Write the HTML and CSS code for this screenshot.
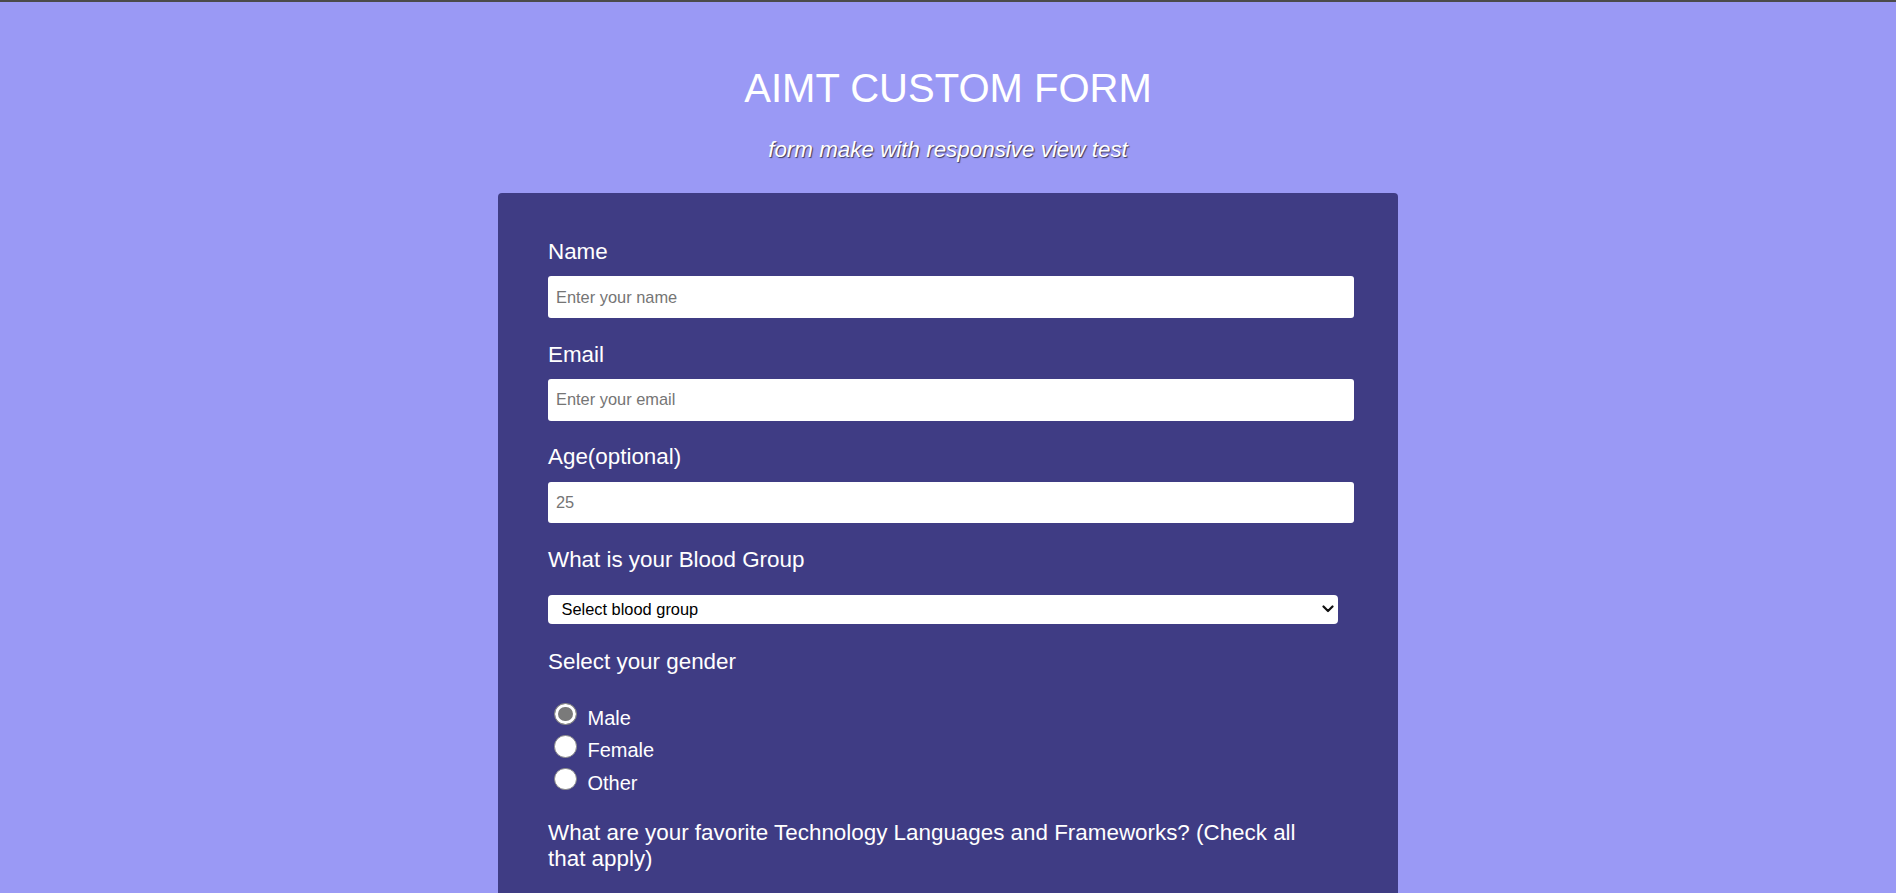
FILE: index.html
```html
<!DOCTYPE html>
<html lang="en">
<head>
<meta charset="utf-8">
<title>AIMT Custom Form</title>
<link rel="stylesheet" href="styles.css">
</head>
<body>
<header class="page-header">
  <h1 class="title">AIMT CUSTOM FORM</h1>
  <p class="subtitle">form make with responsive view test</p>
</header>
<main class="card">
  <form class="survey">
    <div class="group">
      <label class="field-label" for="name">Name</label>
      <input class="text-input" id="name" type="text" placeholder="Enter your name">
    </div>
    <div class="group">
      <label class="field-label" for="email">Email</label>
      <input class="text-input" id="email" type="email" placeholder="Enter your email">
    </div>
    <div class="group">
      <label class="field-label" for="age">Age(optional)</label>
      <input class="text-input" id="age" type="number" placeholder="25">
    </div>
    <div class="group">
      <p class="field-label">What is your Blood Group</p>
      <div class="select-wrap">
        <select class="select" id="blood">
          <option>Select blood group</option>
          <option>A+</option>
          <option>A-</option>
          <option>B+</option>
          <option>B-</option>
          <option>O+</option>
          <option>O-</option>
          <option>AB+</option>
          <option>AB-</option>
        </select>
        <svg class="chevron" width="12" height="8" viewBox="0 0 12 8" aria-hidden="true"><path d="M1.5 1.5 L6 6 L10.5 1.5" fill="none" stroke="#111" stroke-width="2.2" stroke-linecap="round" stroke-linejoin="round"/></svg>
      </div>
    </div>
    <div class="group group-radio">
      <p class="field-label">Select your gender</p>
      <div class="radio-list">
        <label class="radio-row"><input class="radio" type="radio" name="gender" checked><span>Male</span></label>
        <label class="radio-row"><input class="radio" type="radio" name="gender"><span>Female</span></label>
        <label class="radio-row"><input class="radio" type="radio" name="gender"><span>Other</span></label>
      </div>
    </div>
    <div class="group group-last">
      <p class="field-label wrap-label">What are your favorite Technology Languages and Frameworks? (Check all that apply)</p>
    </div>
  </form>
</main>
</body>
</html>
```
FILE: styles.css
```css
html, body {
  margin: 0;
  padding: 0;
}

body {
  background: #9a99f5;
  border-top: 2px solid #4b4b4b;
  font-family: "Liberation Sans", Arial, sans-serif;
  color: #ffffff;
}

.page-header {
  text-align: center;
  padding-top: 63.8px;
}

.title {
  margin: 0;
  font-size: 40px;
  font-weight: 400;
  line-height: normal;
}

.subtitle {
  margin: 26.6px 0 0;
  font-size: 22.4px;
  font-style: italic;
  line-height: normal;
  text-shadow: 1px 1px 1px #3a3a5a;
}

.card {
  width: 900px;
  box-sizing: border-box;
  margin: 30px auto 0;
  padding: 45.5px 44px 60px 50px;
  background: #3f3c84;
  border-radius: 4px;
}

.survey {
  margin: 0;
}

.group {
  margin-bottom: 23.7px;
}

.group-last {
  margin-bottom: 0;
}

.field-label {
  display: block;
  margin: 0;
  font-size: 22.4px;
  line-height: normal;
}

.text-input {
  display: block;
  box-sizing: border-box;
  width: 100%;
  height: 41.7px;
  margin-top: 11.3px;
  padding: 0 8px;
  border: none;
  border-radius: 3px;
  background: #ffffff;
  font-family: "Liberation Sans", Arial, sans-serif;
  font-size: 16.4px;
  color: #222;
  outline: none;
}

.text-input::placeholder {
  color: #757575;
}

.text-input::-webkit-outer-spin-button,
.text-input::-webkit-inner-spin-button {
  -webkit-appearance: none;
  margin: 0;
}

.select-wrap {
  position: relative;
  width: 789.7px;
  margin-top: 22px;
}

.select {
  display: block;
  -webkit-appearance: none;
  appearance: none;
  box-sizing: border-box;
  width: 100%;
  height: 29px;
  padding: 0 30px 0 13.5px;
  border: none;
  border-radius: 4px;
  background: #ffffff;
  color: #000;
  font-family: "Liberation Sans", Arial, sans-serif;
  font-size: 16.4px;
  outline: none;
}

.chevron {
  position: absolute;
  right: 4px;
  top: 10.5px;
  pointer-events: none;
}

.group-radio {
  margin-top: 24.8px;
  margin-bottom: 24.8px;
}

.radio-list {
  margin-top: 22.6px;
}

.radio-row {
  display: flex;
  align-items: flex-end;
  height: 32.5px;
  font-size: 20px;
  line-height: normal;
}

.radio {
  -webkit-appearance: none;
  appearance: none;
  flex: none;
  width: 22.5px;
  height: 22.5px;
  margin: 0 11px 4.6px 6px;
  box-sizing: border-box;
  border: 1.5px solid #8a8a8a;
  border-radius: 50%;
  background: #ffffff;
}

.radio:checked {
  background: #7a7a7a;
  box-shadow: inset 0 0 0 3px #ffffff;
}

.wrap-label {
  max-width: 770px;
}
```
